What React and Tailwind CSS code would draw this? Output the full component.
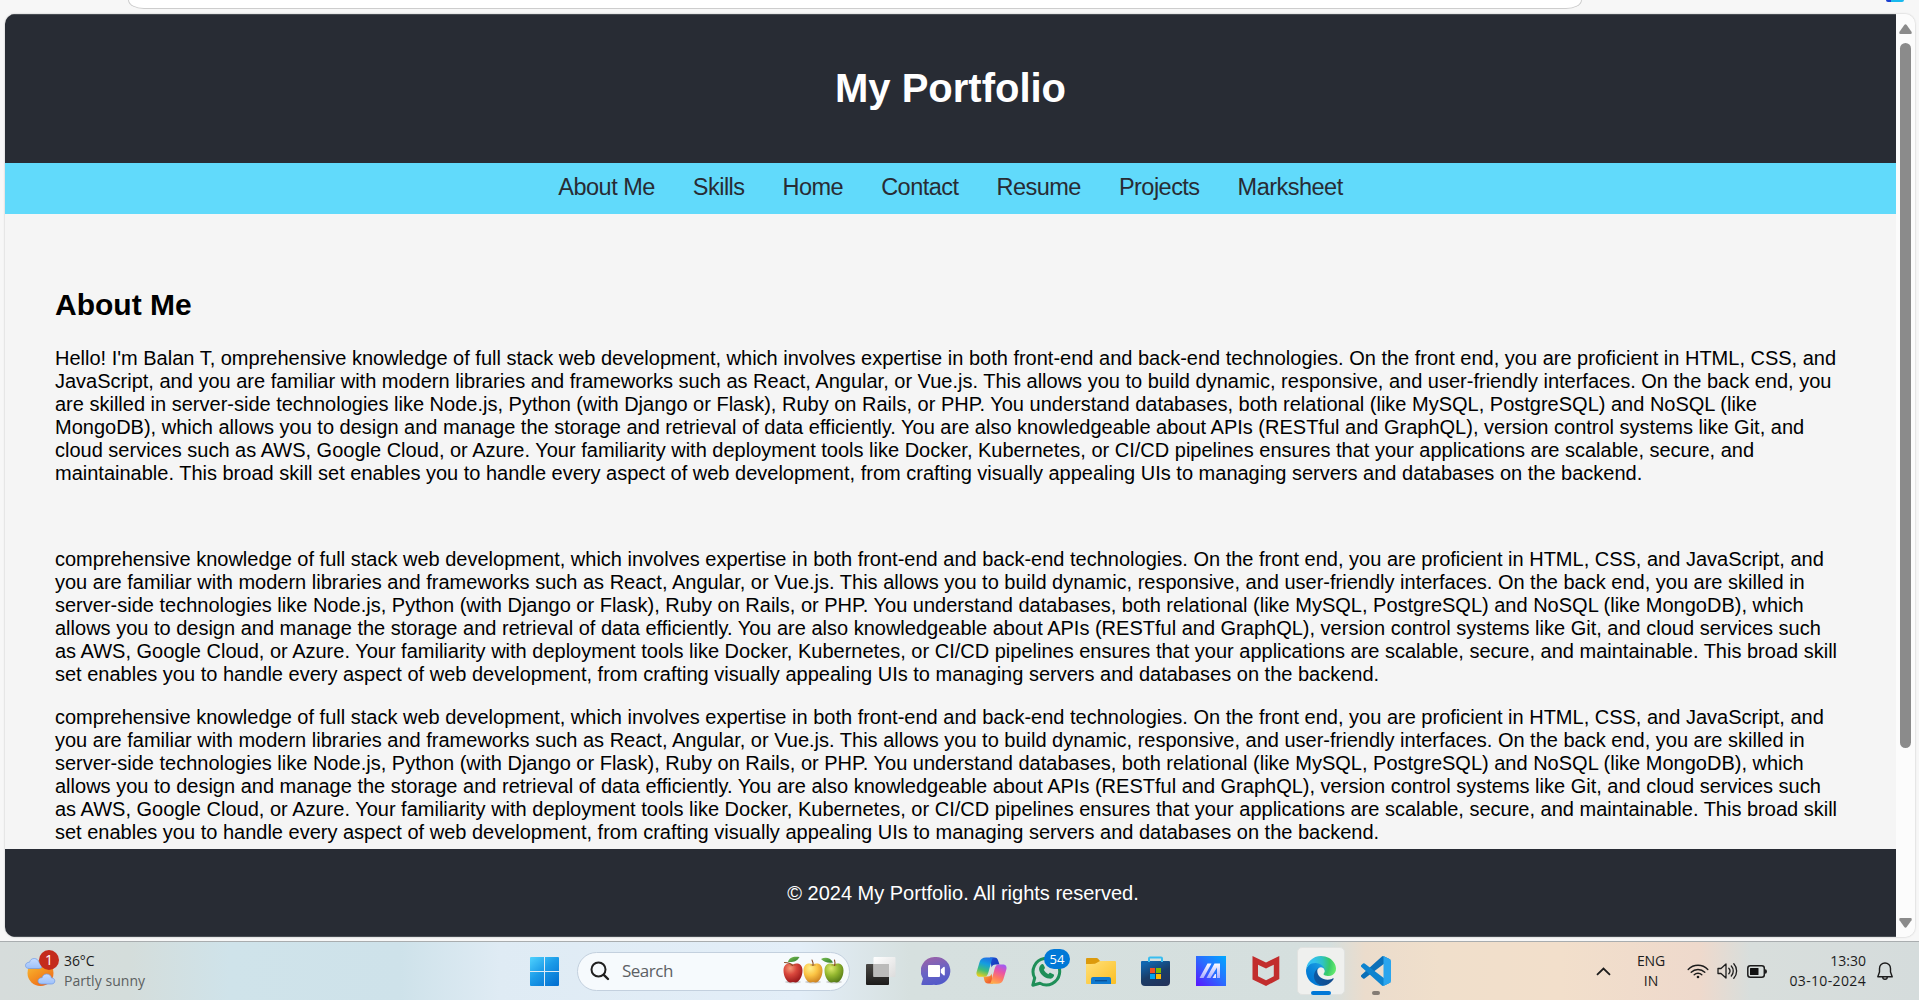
const P1 = [
  "Hello! I'm Balan T, omprehensive knowledge of full stack web development, which involves expertise in both front-end and back-end technologies. On the front end, you are proficient in HTML, CSS, and",
  'JavaScript, and you are familiar with modern libraries and frameworks such as React, Angular, or Vue.js. This allows you to build dynamic, responsive, and user-friendly interfaces. On the back end, you',
  'are skilled in server-side technologies like Node.js, Python (with Django or Flask), Ruby on Rails, or PHP. You understand databases, both relational (like MySQL, PostgreSQL) and NoSQL (like',
  'MongoDB), which allows you to design and manage the storage and retrieval of data efficiently. You are also knowledgeable about APIs (RESTful and GraphQL), version control systems like Git, and',
  'cloud services such as AWS, Google Cloud, or Azure. Your familiarity with deployment tools like Docker, Kubernetes, or CI/CD pipelines ensures that your applications are scalable, secure, and',
  'maintainable. This broad skill set enables you to handle every aspect of web development, from crafting visually appealing UIs to managing servers and databases on the backend.',
];

const P2 = [
  'comprehensive knowledge of full stack web development, which involves expertise in both front-end and back-end technologies. On the front end, you are proficient in HTML, CSS, and JavaScript, and',
  'you are familiar with modern libraries and frameworks such as React, Angular, or Vue.js. This allows you to build dynamic, responsive, and user-friendly interfaces. On the back end, you are skilled in',
  'server-side technologies like Node.js, Python (with Django or Flask), Ruby on Rails, or PHP. You understand databases, both relational (like MySQL, PostgreSQL) and NoSQL (like MongoDB), which',
  'allows you to design and manage the storage and retrieval of data efficiently. You are also knowledgeable about APIs (RESTful and GraphQL), version control systems like Git, and cloud services such',
  'as AWS, Google Cloud, or Azure. Your familiarity with deployment tools like Docker, Kubernetes, or CI/CD pipelines ensures that your applications are scalable, secure, and maintainable. This broad skill',
  'set enables you to handle every aspect of web development, from crafting visually appealing UIs to managing servers and databases on the backend.',
];

const NAV = ['About Me', 'Skills', 'Home', 'Contact', 'Resume', 'Projects', 'Marksheet'];

function Paragraph({ lines, className }) {
  return (
    <p className={className}>
      {lines.map((l) => (
        <span key={l} className="block whitespace-nowrap">{l}</span>
      ))}
    </p>
  );
}

function Grad({ id, stops, x1 = 0, y1 = 0, x2 = 1, y2 = 1 }) {
  return (
    <linearGradient id={id} x1={x1} y1={y1} x2={x2} y2={y2}>
      {stops.map((c, i) => (
        <stop key={i} offset={i / (stops.length - 1)} stopColor={c} />
      ))}
    </linearGradient>
  );
}

function Cloud({ transform }) {
  return (
    <path
      transform={transform}
      d="M4.2 10.5H14c2 0 3.3-1.3 3.3-3.1S15.900 4.600 14 4.500C13.500 2 11.600.5 9.200.5S5 2 4.600 4.200C2.200 4.200.5 5.500.5 7.500s1.500 3 3.700 3Z"
      fill="url(#cloud)" stroke="#6f9ae6" strokeWidth=".7"
    />
  );
}

function Weather() {
  return (
    <svg width="32" height="34" viewBox="0 0 32 34">
      <defs>
        <Grad id="sun" stops={['#f7c443', '#f59a23', '#ee6c1b']} x2={0.6} />
        <Grad id="cloud" stops={['#c6dcff', '#9dc0fa']} x2={0} />
      </defs>
      <circle cx="15.500" cy="20" r="13" fill="url(#sun)" />
      <Cloud transform="translate(0 5)" />
      <Cloud transform="translate(12.500 20.500)" />
    </svg>
  );
}

function StartIcon() {
  return (
    <svg width="29" height="29" viewBox="0 0 29 29">
      <defs><linearGradient id="win" gradientUnits="userSpaceOnUse" x1="0" y1="0" x2="24" y2="29"><stop stopColor="#4fd2fe" /><stop offset=".5" stopColor="#1b9be8" /><stop offset="1" stopColor="#0572d2" /></linearGradient></defs>
      <path fill="url(#win)" d="M1 0h13v14H0V1q0-1 1-1ZM15 0h13q1 0 1 1v13H15ZM0 15h14v14H1q-1 0-1-1ZM15 15h14v13q0 1-1 1H15Z" />
    </svg>
  );
}

function Fruit({ x, fill, leaf, stem }) {
  return (
    <g transform={`translate(${x} 0)`}>
      <ellipse cx="10" cy="26" rx="8" ry="1.500" fill="#9a9a9a" opacity=".45" />
      <path fill={fill} d="M10 8.500C7 6.500.5 7 .5 14.500.5 20.500 4 26.500 7.500 26.500c1 0 1.500-.4 2.500-.4s1.500.4 2.500.4c3.500 0 7-6 7-12C19.500 7 13 6.500 10 8.500Z" />
      <ellipse cx="10" cy="9" rx="3" ry="1" fill="#7a3b12" opacity=".25" />
      <path d={stem} fill="none" stroke="#8a4a24" strokeWidth="1.100" strokeLinecap="round" />
      {leaf && <path d={leaf} fill="url(#leaf)" />}
    </g>
  );
}

function Apples() {
  return (
    <svg width="62" height="29" viewBox="0 0 62 29">
      <defs>
        <radialGradient id="apR" cx=".35" cy=".25" r=".85"><stop stopColor="#f59a78" /><stop offset=".4" stopColor="#d9473c" /><stop offset="1" stopColor="#8e0f14" /></radialGradient>
        <radialGradient id="apY" cx=".35" cy=".25" r=".85"><stop stopColor="#fff08c" /><stop offset=".45" stopColor="#fbc444" /><stop offset="1" stopColor="#c5781c" /></radialGradient>
        <radialGradient id="apG" cx=".35" cy=".25" r=".85"><stop stopColor="#dcea6c" /><stop offset=".45" stopColor="#94b72f" /><stop offset="1" stopColor="#4a7014" /></radialGradient>
        <Grad id="leaf" stops={['#7cc054', '#2d7a2b']} />
      </defs>
      <Fruit x={0} fill="url(#apR)" stem="M9.500 9.500Q7 6.500 1.500 6.500" leaf="M5 6C6 1 11 0 16.500 1 14 5.500 10 6.500 5 6Z" />
      <Fruit x={20} fill="url(#apY)" stem="M10 9.500Q10.500 7 9 4" />
      <Fruit x={41} fill="url(#apG)" stem="M10.500 9.500Q11.500 7 10.500 4" leaf="M-3 3C1 1 6 1 9 6.500 4 7.500 0 6 -3 3Z" />
    </svg>
  );
}

function TaskView() {
  return (
    <svg width="30" height="30" viewBox="0 0 30 30">
      <defs>
        <Grad id="tvd" stops={['#4a4845', '#1c1b1a']} x2={0} />
        <Grad id="tvl" stops={['#ffffff', '#dcdcdc']} />
      </defs>
      <rect x="0" y="8" width="23" height="21" rx="1" fill="url(#tvd)" />
      <rect x="7.500" y="1" width="22" height="20" rx="1" fill="url(#tvl)" />
      <rect x="7.500" y="8" width="15.500" height="13" fill="#bbbbba" />
    </svg>
  );
}

function Chat() {
  return (
    <svg width="30" height="30" viewBox="0 0 30 30">
      <defs><Grad id="chat" stops={['#9a62a8', '#6a63c4', '#5059c9']} x1={0.3} x2={0.6} /></defs>
      <path fill="url(#chat)" d="M15 1a14 14 0 1 1-2 27.800q-2 .2-4 .2H1.500q-1.500 0-1-1.500L2 22.500A14 14 0 0 1 15 1Z" />
      <rect x="7" y="9" width="12" height="12" rx="1" fill="#fff" />
      <path fill="#fff" d="M19.800 13.500 22.500 11q1.300-.8 1.300.8v6.800q0 1.500-1.300.7l-2.700-2.500Z" />
    </svg>
  );
}

function Copilot() {
  return (
    <svg width="31" height="30" viewBox="0 0 31 30">
      <defs>
        <Grad id="cpA" stops={['#1f6fe5', '#159ee0', '#3fbd7a', '#e8cf1c']} x1={0.6} x2={0.3} />
        <Grad id="cpB" stops={['#a35bf0', '#e853a8', '#ff7a63', '#ffb04a']} x1={0.7} x2={0.3} />
        <Grad id="cpC" stops={['#1a4fd0', '#1734b8']} />
        <Grad id="cpD" stops={['#ffb13a', '#e8452c']} />
      </defs>
      <path fill="url(#cpC)" d="M14 1.500h4.500c2 0 3 1 3.600 3l1.400 4h-4c-2 0-3.400 1-4 3Z" />
      <path fill="url(#cpD)" d="M17 27.500h-5c-2 0-3-1-3.600-3L7.500 20.500h4.500c2 0 3-1 3.600-3Z" />
      <path fill="url(#cpA)" d="M10 1.500h8.500c-1.500 0-2.300 1-2.800 2.800L12.500 16c-1 3.500-2 4.800-4.500 4.800H4C1 20.800 0 18.500.6 16l3-10C4.500 3 6.500 1.500 10 1.500Z" />
      <path fill="url(#cpB)" d="M21 27.700h-8.500c1.500 0 2.300-1 2.800-2.800l3.200-11.700c1-3.500 2-4.800 4.500-4.800h4c3 0 4 2.300 3.400 4.800l-3 10c-.9 3-2.900 4.500-6.400 4.500Z" />
    </svg>
  );
}

function WhatsApp() {
  return (
    <svg width="31" height="31" viewBox="0 0 31 31">
      <path d="M1.800 29.200 3.700 22A13.300 13.300 0 1 1 9 27.300Z" fill="none" stroke="#1f8f58" strokeWidth="3" strokeLinejoin="round" />
      <path fill="#1f8f58" d="M10.600 8.200c.7-.5 1.600-.3 2 .5l1.200 2.600c.3.7 0 1.300-1 2.400.9 1.900 2.400 3.400 4.600 4.500 1-1.100 1.500-1.600 2.300-1.300l2.600 1.300c.8.400.9 1 .6 1.900-.7 1.900-2.700 2.900-4.800 2.500-5.200-1-9.400-5-10-9.200-.2-2 .8-4 2.500-5.200Z" />
    </svg>
  );
}

function Folder() {
  return (
    <svg width="30" height="30" viewBox="0 0 30 30">
      <defs><Grad id="fold" stops={['#ffe07a', '#fbbf24']} /></defs>
      <path fill="#dc9a0c" d="M1 2h9.500q1 0 1.600.8L14 5v5H0V3q0-1 1-1Z" />
      <path fill="url(#fold)" d="M0 8q5 0 9-.2L14 5h15q1 0 1 1v21q0 1-1 1H1q-1 0-1-1Z" />
      <path fill="#0f7ad0" d="M5 28v-5q0-2 2-2h16q2 0 2 2v5Z" />
      <path stroke="#0a4f94" strokeWidth="1.300" d="M9 24.700h12" />
    </svg>
  );
}

function Store() {
  return (
    <svg width="30" height="30" viewBox="0 0 30 30">
      <defs><Grad id="store" stops={['#0f66b0', '#1a3d68', '#23335b']} x1={0.3} x2={0.8} /></defs>
      <path fill="url(#store)" d="M1 5h27q1 0 1 1v20q0 4-4 4H4q-4 0-4-4V6q0-1 1-1Z" />
      <path d="M8 6V2.500Q8 1.500 9 1.500h11q1 0 1 1V6" fill="none" stroke="#38bdf0" strokeWidth="2" />
      <path fill="#f25022" d="M9 12h5v5H9z" /><path fill="#7fba00" d="M15 12h5v5h-5z" />
      <path fill="#00a4ef" d="M9 18h5v5H9z" /><path fill="#ffb900" d="M15 18h5v5h-5z" />
    </svg>
  );
}

function Asus() {
  return (
    <svg width="30" height="30" viewBox="0 0 30 30">
      <defs>
        <Grad id="asus" stops={['#5a14ff', '#2b6bff', '#00a9ff']} x1={0} y1={1} x2={1} y2={0} />
        <linearGradient id="asusw" gradientUnits="userSpaceOnUse" x1="0" y1="7" x2="0" y2="22"><stop stopColor="#fff" /><stop offset="1" stopColor="#a9adff" /></linearGradient>
      </defs>
      <path fill="url(#asus)" d="M0 0h30v30H0z" />
      <path fill="url(#asusw)" d="M11.500 7.500h4L7.500 22h-4ZM18.500 7.500h5.500V22h-3V11.500L14.500 22h-4Z" />
      <path fill="#e6e8ff" d="m16.500 22 2.500-4 1 0v4Z" />
    </svg>
  );
}

function McAfee() {
  return (
    <svg width="28" height="30" viewBox="0 0 28 30">
      <path fill="#c22d2d" fillRule="evenodd" d="M.5 0 14 6.500 27.300 0v23L14 30 .5 23.500ZM6 8.700v11.600l8 4 7.800-4V8.700L14 12.400Z" />
    </svg>
  );
}

function Edge() {
  return (
    <svg width="30" height="30" viewBox="0 0 256 256">
      <defs>
        <linearGradient id="e1" gradientUnits="userSpaceOnUse" x1="63" y1="177" x2="241" y2="177"><stop stopColor="#0c59a4" /><stop offset="1" stopColor="#114a8b" /></linearGradient>
        <linearGradient id="e2" gradientUnits="userSpaceOnUse" x1="157" y1="100" x2="46" y2="222"><stop stopColor="#1b9de2" /><stop offset=".16" stopColor="#1595df" /><stop offset=".67" stopColor="#0680d7" /><stop offset="1" stopColor="#0078d4" /></linearGradient>
        <radialGradient id="e3" gradientUnits="userSpaceOnUse" cx="25" cy="60" r="235"><stop stopColor="#35c1f1" /><stop offset=".2" stopColor="#34c1ed" /><stop offset=".5" stopColor="#2fc2c4" /><stop offset=".75" stopColor="#36c96a" /><stop offset="1" stopColor="#66eb6e" /></radialGradient>
      </defs>
      <path fill="url(#e1)" d="M231 190.500c-3.400 1.800-6.900 3.400-10.500 4.700a101.800 101.800 0 0 1-35.900 6.500c-47.300 0-88.500-32.500-88.500-74.300 0-11.400 6.200-21.900 16.200-27.500-42.800 1.800-53.800 46.400-53.800 72.500 0 73.900 68.100 81.400 82.800 81.400 7.900 0 19.800-2.300 27-4.600l1.300-.4a128.300 128.300 0 0 0 66.600-52.800 4 4 0 0 0-5.200-5.500Z" />
      <path fill="url(#e2)" d="M105.700 241.400a79.200 79.200 0 0 1-22.700-21.300 80.700 80.700 0 0 1 29.500-120.100c3.100-1.500 8.500-4.100 15.600-4a32.400 32.400 0 0 1 25.700 13 31.900 31.900 0 0 1 6.300 18.700c0-.2 24.500-79.600-80-79.600-43.900 0-80 41.700-80 78.200a130.200 130.200 0 0 0 12.100 56 128 128 0 0 0 156.400 67 75.500 75.500 0 0 1-62.800-8Z" />
      <path fill="url(#e3)" d="M152.300 148.900c-.8 1-3.300 2.500-3.300 5.700 0 2.600 1.700 5.100 4.700 7.200 14.400 10 41.500 8.700 41.600 8.700a59.600 59.600 0 0 0 30.300-8.300A61.400 61.400 0 0 0 256 109.200c.3-22.400-8-37.300-11.300-43.900C223.500 23.900 177.700 0 128 0A128 128 0 0 0 0 126.200c.5-36.500 36.800-66 80-66 3.500 0 23.500.3 42 10a72.600 72.600 0 0 1 30.900 29.300c6.100 10.600 7.200 24.100 7.200 29.500s-2.700 13.300-7.800 19.900Z" />
    </svg>
  );
}

function VSCode() {
  return (
    <svg width="30" height="30" viewBox="0 0 100 100">
      <path fill="#0a6fb8" d="M96.500 10.800 75.900.9a6.200 6.200 0 0 0-7.100 1.200L1.300 63.600a4.200 4.200 0 0 0 0 6.200l5.500 5a4.200 4.200 0 0 0 5.300.2L93.400 13.400c2.700-2 6.600-.1 6.600 3.300v-.2a6.200 6.200 0 0 0-3.500-5.700Z" />
      <path fill="#0e84cf" d="m96.500 89.200-20.600 9.900a6.200 6.200 0 0 1-7.100-1.200L1.300 36.400a4.200 4.200 0 0 1 0-6.200l5.500-5a4.200 4.200 0 0 1 5.300-.2l81.300 61.600c2.700 2 6.600.1 6.600-3.300v.2a6.200 6.200 0 0 1-3.500 5.700Z" />
      <path fill="#2aa5ee" d="M75.900 99.100a6.200 6.200 0 0 1-7.100-1.200c2.300 2.300 6.200.7 6.200-2.600V4.700c0-3.300-3.900-4.900-6.200-2.600A6.200 6.200 0 0 1 75.900.9l20.600 9.900a6.200 6.200 0 0 1 3.500 5.600v67.200a6.200 6.200 0 0 1-3.500 5.600Z" />
    </svg>
  );
}

function Slot({ children, active, mark }) {
  return (
    <div className="flex w-[55px] justify-center">
      <div className={active ? 'relative flex size-12 items-center justify-center rounded-[5px] border border-[#e0e2e0] bg-[#eff0ee]' : 'relative flex size-12 items-center justify-center'}>
        {children}
        {mark}
      </div>
    </div>
  );
}

function Taskbar() {
  return (
    <div className="flex h-[59px] w-full items-center border-t border-[#a9adaf] bg-[linear-gradient(90deg,#d6dcdb_0px,#d4dddb_130px,#cfe3ea_230px,#cee2ea_400px,#dfebf4_500px,#e3eef8_800px,#d6e0df_910px,#d5dfde_1330px,#ebdccc_1365px,#f0dfcb_1440px,#f2dfcb_1560px,#eed9cc_1700px,#d8dedc_1750px,#d5dcdc_1919px)] font-['Open_Sans','Noto_Sans',sans-serif] text-[14px] leading-5 text-[#1c1c1c]">
      <div className="relative ml-[25px] mt-[-3px] w-8"><Weather />
        <span className="absolute left-[14px] top-[-3px] flex size-5 items-center justify-center rounded-full bg-[#c42b1c] text-[14px] text-white">1</span>
      </div>
      <div className="ml-[7px] w-[466px] tracking-[-0.100px]">
        <div>36°C</div>
        <div className="tracking-[0.050px] text-[#5b6060]">Partly sunny</div>
      </div>
      <StartIcon />
      <div className="ml-[18px] flex h-[39px] w-[273px] items-center rounded-full border border-[#c3d0de] bg-[#f6fafd] pl-[12px] pr-[4px]">
        <svg width="20" height="20" viewBox="0 0 20 20" fill="none" stroke="#1f1f1f" strokeWidth="2" strokeLinecap="round"><circle cx="8.500" cy="8.500" r="7" /><path strokeWidth="2.400" d="m13.800 13.800 4.200 4.200" /></svg>
        <span className="ml-[12px] flex-1 text-[17px] tracking-[-0.500px] text-[#5c6064]">Search</span>
        <div className="-mt-px"><Apples /></div>
      </div>
      <div className="ml-[3.500px] flex w-[550px]">
        <Slot><TaskView /></Slot>
        <Slot><Chat /></Slot>
        <Slot><Copilot /></Slot>
        <Slot mark={<span className="absolute left-[22px] top-[2px] flex h-5 w-[26px] items-center justify-center rounded-full bg-[#0078d7] text-[13px] text-white">54</span>}><WhatsApp /></Slot>
        <Slot><Folder /></Slot>
        <Slot><Store /></Slot>
        <Slot><Asus /></Slot>
        <Slot><McAfee /></Slot>
        <Slot active mark={<span className="absolute bottom-[-1px] left-[13px] h-1 w-5 rounded-full bg-[#0078d7]" />}><Edge /></Slot>
        <Slot mark={<span className="absolute bottom-0 left-5 h-1 w-2 rounded-full bg-[#857c74]" />}><VSCode /></Slot>
      </div>
      <div className="ml-auto flex items-center pr-[26px]">
        <svg width="15" height="9" viewBox="0 0 15 9" fill="none" stroke="#1c1c1c" strokeWidth="1.800"><path d="m1 7.800 6.500-6.300L14 7.800" /></svg>
        <div className="ml-[25px] w-[30px] text-center tracking-[-0.100px]"><div>ENG</div><div>IN</div></div>
        <svg className="ml-[21px]" width="22" height="16" viewBox="0 0 22 16" fill="none" stroke="#1c1c1c" strokeWidth="1.400" strokeLinecap="round"><path d="M1.200 6.500a13.500 13.500 0 0 1 19.600 0M4.200 9.300a9.500 9.500 0 0 1 13.600 0M7.200 11.800a5.500 5.500 0 0 1 7.600 0" /><circle cx="11" cy="14" r="1.300" fill="#1c1c1c" stroke="none" /></svg>
        <svg className="ml-[8px]" width="21" height="18" viewBox="0 0 21 18" fill="none" stroke="#1c1c1c" strokeWidth="1.300" strokeLinecap="round" strokeLinejoin="round"><path d="M1 6.500h3L9 2v14l-5-4.500H1Z" /><path d="M11.800 6.300a4 4 0 0 1 0 5.400M14.300 4a7.400 7.400 0 0 1 0 10M16.800 1.800a10.600 10.600 0 0 1 0 14.400" /></svg>
        <svg className="ml-[9px]" width="21" height="13" viewBox="0 0 21 13"><rect x=".8" y=".8" width="16.500" height="11.400" rx="2.500" fill="none" stroke="#1c1c1c" strokeWidth="1.500" /><rect x="3" y="3" width="8.500" height="7" rx=".5" fill="#111" /><path d="M18 4.200q2 0 2 2.300t-2 2.300Z" fill="#1c1c1c" /></svg>
        <div className="ml-[16px] w-[82px] text-right tracking-[0.350px]"><div className="tracking-normal">13:30</div><div>03-10-2024</div></div>
        <svg className="ml-[11px]" width="16" height="19" viewBox="0 0 16 19" fill="none" stroke="#1c1c1c" strokeWidth="1.400" strokeLinejoin="round"><path d="M8 1a5.500 5.500 0 0 1 5.500 5.500V10l1.700 4.800H.8L2.500 10V6.500A5.500 5.500 0 0 1 8 1ZM5.700 15a2.300 2.300 0 0 0 4.600 0" /></svg>
      </div>
    </div>
  );
}

function Scrollbar() {
  return (
    <div className="flex w-[19px] flex-col items-center bg-[#fcfcfc] pt-[10px]">
      <svg width="13" height="10" viewBox="0 0 13 10"><path fill="#8b8b8b" d="M5.300 1Q6.500-.4 7.700 1l4.800 6.800Q13.300 10 11.500 10h-10Q-.3 10 .5 7.800Z" /></svg>
      <div className="mt-[9px] h-[705px] w-[11px] rounded-full bg-[#8b8b8b]" />
      <svg className="mb-[9px] mt-auto" width="13" height="10" viewBox="0 0 13 10"><path fill="#8b8b8b" d="M5.300 9Q6.500 10.400 7.700 9l4.800-6.800Q13.300 0 11.500 0h-10Q-.3 0 .5 2.200Z" /></svg>
    </div>
  );
}

export default function App() {
  return (
    <div className="flex h-[1000px] w-[1919px] flex-col overflow-hidden bg-[#f7f7f7] font-['Liberation_Sans',Arial,sans-serif]">
      <div className="flex h-[14px] items-start justify-between pl-[128px] pr-[15px]">
        <div className="h-[9px] w-[1454px] rounded-b-[16px_9px] border border-t-0 border-[#cdcdcd] bg-white" />
        <div className="h-[2px] w-[18px] rounded-b-[2px] bg-[linear-gradient(90deg,#1b3fd0_30%,#19b9ee_30%)]" />
      </div>
      <div className="ml-[5px] flex h-[923px] w-[1910px] overflow-hidden rounded-[10px] shadow-[0_0_2px_#b8b8b8]">
        <div className="flex w-[1891px] flex-col bg-[#f5f5f5] text-[20px] leading-[23px] text-black">
          <header className="flex h-[149px] shrink-0 items-center justify-center border-t border-[#484d53] bg-[#282c34] pb-[3px] text-white">
            <h1 className="text-[40px] font-bold leading-[46px]">My Portfolio</h1>
          </header>
          <nav className="flex h-[51px] shrink-0 items-start justify-center gap-[38px] bg-[#61dafb] pt-[11px] text-[23.500px] leading-[26px] tracking-[-0.520px] text-[#282c34]">
            {NAV.map((n) => <a key={n}>{n}</a>)}
          </nav>
          <main className="h-[635px] overflow-hidden px-[50px] pt-[73px]">
            <h2 className="text-[30px] font-bold leading-[35px]">About Me</h2>
            <Paragraph lines={P1} className="mt-[25px]" />
            <Paragraph lines={P2} className="mt-[63px]" />
            <Paragraph lines={P2} className="mt-[20px]" />
          </main>
          <footer className="flex h-[88px] shrink-0 items-center justify-center border-b border-[#484d53] bg-[#282c34] pl-[25px] pt-[2px] text-white">
            <p>© 2024 My Portfolio. All rights reserved.</p>
          </footer>
        </div>
        <Scrollbar />
      </div>
      <div className="mt-auto"><Taskbar /></div>
    </div>
  );
}
